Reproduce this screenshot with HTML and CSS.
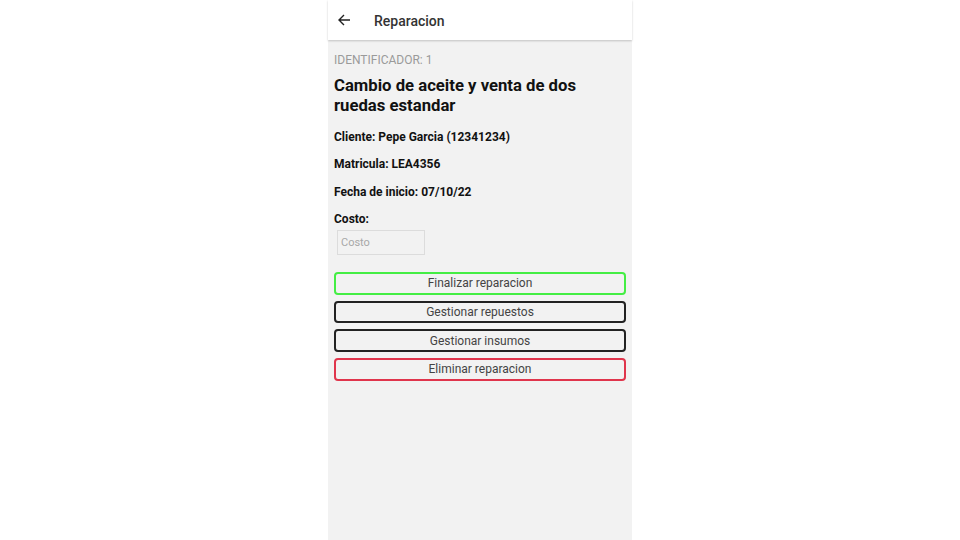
FILE: index.html
```html
<!DOCTYPE html>
<html>
<head>
<meta charset="utf-8">
<link rel="stylesheet" href="styles.css">
</head>
<body>
<div class="stage">
  <div class="phone">
    <header class="appbar">
      <svg class="back" width="14" height="14" viewBox="0 0 14 14"><path d="M13 7H2M7 2L2 7l5 5" fill="none" stroke="#222" stroke-width="1.4"/></svg>
      <span class="title">Reparacion</span>
    </header>
    <main class="content">
      <div class="ident">IDENTIFICADOR: 1</div>
      <h1 class="heading">Cambio de aceite y venta de dos ruedas estandar</h1>
      <p class="field">Cliente: Pepe Garcia (12341234)</p>
      <p class="field">Matricula: LEA4356</p>
      <p class="field">Fecha de inicio: 07/10/22</p>
      <p class="field">Costo:</p>
      <input class="cost" type="text" placeholder="Costo">
      <div class="actions">
        <button class="btn btn-green">Finalizar reparacion</button>
        <button class="btn">Gestionar repuestos</button>
        <button class="btn">Gestionar insumos</button>
        <button class="btn btn-red">Eliminar reparacion</button>
      </div>
    </main>
  </div>
</div>
</body>
</html>
```
FILE: styles.css
```css
* { box-sizing: border-box; }
html, body { margin: 0; padding: 0; background: #fff; }
body { font-family: Roboto, "Liberation Sans", sans-serif; }
.stage { width: 960px; height: 540px; display: flex; justify-content: center; }
.phone { width: 304px; height: 540px; background: #f2f2f2; display: flex; flex-direction: column; }
.appbar {
  height: 40px; background: #fff; display: flex; align-items: center;
  padding-left: 9px; box-shadow: 0 1px 2px rgba(0,0,0,0.2); position: relative; z-index: 1;
}
.back { display: block; margin-top: -1px; }
.title { margin-left: 23px; font-size: 14px; font-weight: 500; color: #333; margin-top: 1px; }
.content { padding: 12px 6px 0 6px; display: flex; flex-direction: column; }
.ident { font-size: 12px; color: #9a9a9a; line-height: 16px; }
.heading { margin: 8px 0 0 0; font-size: 16.7px; font-weight: 700; line-height: 20px; color: #111; }
.field { margin: 0; font-size: 12px; font-weight: 700; color: #111; line-height: 16px; margin-top: 11.3px; }
.heading + .field { margin-top: 13px; }
.cost {
  margin: 3px 0 0 3px; width: 88px; height: 25px; border: 1px solid #dcdcdc; background: #f2f2f2;
  font-family: Roboto, "Liberation Sans", sans-serif; font-size: 11px; padding: 0 0 0 3px; outline: none;
}
.cost::placeholder { color: #a8a8a8; }
.actions { display: flex; flex-direction: column; gap: 6px; margin-top: 17px; width: 292px; }
.btn {
  height: 22.7px; border: 2px solid #222; border-radius: 4px; background: #f2f2f2;
  font-family: Roboto, "Liberation Sans", sans-serif; font-size: 12px; color: #444; padding: 0;
}
.btn-green { border-color: #44ee44; }
.btn-red { border-color: #e0354c; }
```
